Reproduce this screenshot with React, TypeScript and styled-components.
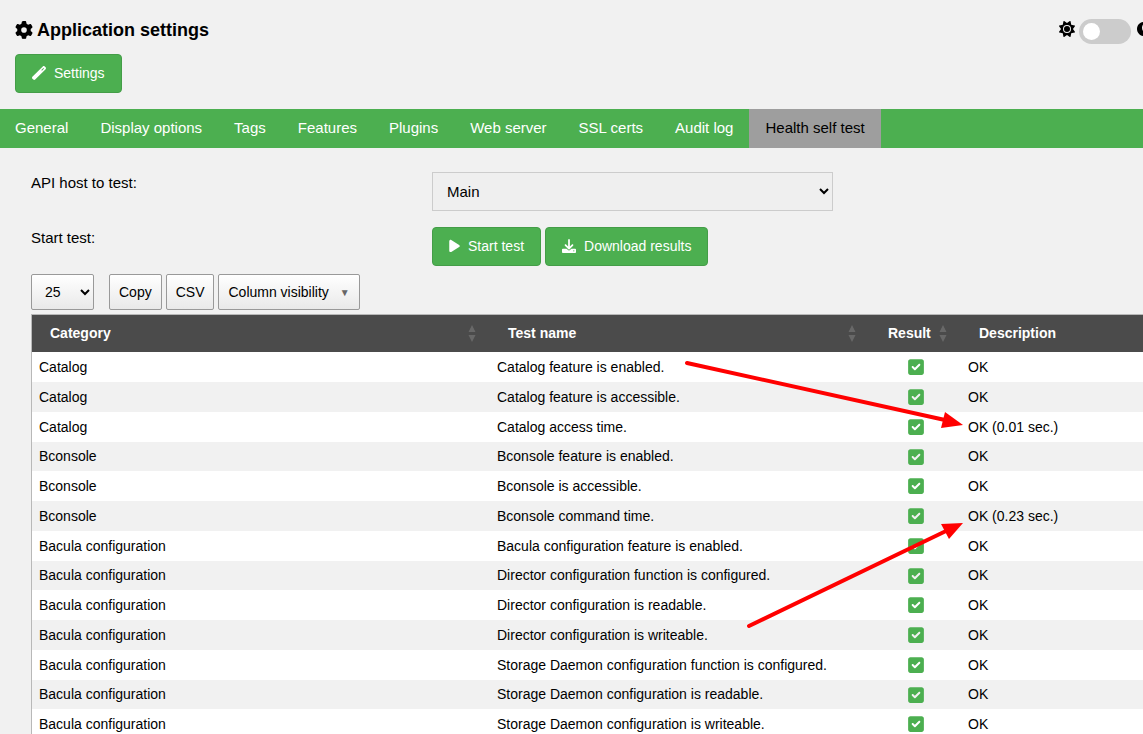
import React from "react";
import styled, { createGlobalStyle } from "styled-components";
import { FaGear, FaMoon, FaSun } from "react-icons/fa6";

const GlobalStyle = createGlobalStyle`
  *, *::before, *::after { box-sizing: border-box; }
  body {
    margin: 0;
    background: #f1f1f1;
    color: #000;
    font: 15px/22px "Liberation Sans", Arial, sans-serif;
  }
  button, select { font-family: inherit; color: inherit; }
`;

const Page = styled.div`
  position: relative;
  min-height: 100vh;
  overflow-x: clip;
`;

const Canvas = styled.div`
  width: calc(100% + 107px);
`;

const Header = styled.header`
  display: flex;
  align-items: center;
  height: 54px;
  padding: 8px 99px 0 15px;
`;

const Title = styled.h1`
  display: flex;
  align-items: center;
  gap: 4px;
  margin: 0;
  padding-bottom: 2px;
  font-size: 18px;
  line-height: 24px;
`;

const ThemeSwitch = styled.label`
  display: flex;
  align-items: center;
  gap: 4px;
  margin-left: auto;
  & > svg { margin-bottom: 4px; }
`;

const Toggle = styled.input`
  appearance: none;
  display: flex;
  align-items: center;
  width: 52px;
  height: 25px;
  margin: 0;
  padding: 0 4px;
  border-radius: 13px;
  background: #ccc;
  &::before {
    content: "";
    width: 17px;
    height: 17px;
    border-radius: 50%;
    background: #fff;
  }
  &:checked { justify-content: flex-end; background: #4caf50; }
`;

const Actions = styled.div`
  display: flex;
  padding: 0 15px 16px;
`;

const GreenButton = styled.button`
  display: inline-flex;
  align-items: center;
  gap: 8px;
  height: 39px;
  padding: 0 16px 2px;
  border: 1px solid #449d48;
  border-radius: 4px;
  background: #4caf50;
  color: #fff;
  font-size: 14px;
  cursor: pointer;
`;

const Glyph = styled.svg<{ $width: number }>`
  flex: none;
  width: ${(p) => p.$width}px;
  height: 14px;
  fill: currentColor;
`;

const TabBar = styled.nav`
  display: flex;
  background: #4caf50;
`;

const Tab = styled.a<{ $active?: boolean }>`
  padding: 8px 16px 9px;
  background: ${(p) => (p.$active ? "#9e9e9e" : "transparent")};
  color: ${(p) => (p.$active ? "#000" : "#fff")};
  text-decoration: none;
  &:first-child { padding-left: 15px; }
`;

const Content = styled.main`
  padding: 24px 16px 0 31px;
`;

const Fields = styled.div`
  display: grid;
  row-gap: 16px;
  margin-bottom: 8px;
`;

const Field = styled.div`
  display: grid;
  grid-template-columns: repeat(3, 1fr);
`;

const Buttons = styled.div`
  display: flex;
  gap: 4px;
`;

const HostSelect = styled.select`
  height: 39px;
  padding: 0 0 0 10px;
  border: 1px solid #ccc;
  background: #efefef;
  font-size: 15px;
`;

const Toolbar = styled.div`
  display: flex;
  gap: 4px;
  margin-bottom: 4px;
`;

const LengthSelect = styled.select`
  width: 63px;
  height: 36px;
  margin-right: 11px;
  padding: 0 0 0 9px;
  border: 1px solid #999;
  border-radius: 2px;
  background: linear-gradient(#fff, #e9e9e9);
  font-size: 14px;
`;

const ToolButton = styled.button`
  display: inline-flex;
  align-items: center;
  gap: 11px;
  height: 36px;
  padding: 0 9px;
  border: 1px solid #999;
  border-radius: 2px;
  background: linear-gradient(#fff, #e9e9e9);
  font-size: 14px;
  cursor: pointer;
`;

const Caret = styled.span`
  color: #666;
  font-size: 10px;
`;

const Table = styled.table`
  width: 100%;
  table-layout: fixed;
  border-spacing: 0;
  border: 1px solid #b8b8b8;
  font-size: 14px;
  line-height: 21px;
`;

const Column = styled.col<{ $width: string }>`
  width: ${(p) => p.$width};
`;

const Th = styled.th`
  height: 37px;
  padding: 0 18px 1px;
  background: #4b4b4b;
  color: #fff;
  text-align: left;
`;

const Heading = styled.div`
  display: flex;
  align-items: center;
  justify-content: space-between;
  gap: 8px;
  margin-right: -4px;
`;

const Sorter = styled.svg`
  flex: none;
  width: 8px;
  height: 18px;
  fill: #686868;
`;

/* Three 30px rows and one of 29px keep the average row a little under 30px. */
const Row = styled.tr`
  height: 30px;
  background: #fff;
  &:nth-child(even) { background: #f1f1f1; }
  &:nth-child(4n) { height: 29px; }
`;

const Td = styled.td<{ $center?: boolean }>`
  padding: 0 7px;
  text-align: ${(p) => (p.$center ? "center" : "left")};
`;

const Passed = styled.svg`
  display: block;
  width: 16px;
  height: 18px;
  margin: 0 auto;
  fill: #4caf50;
`;

const Arrows = styled.svg`
  position: absolute;
  top: 0;
  left: 0;
  pointer-events: none;
`;

const tabs = [
  "General",
  "Display options",
  "Tags",
  "Features",
  "Plugins",
  "Web server",
  "SSL certs",
  "Audit log",
  "Health self test",
];

const results: [string, string, string][] = [
  ["Catalog", "Catalog feature is enabled.", "OK"],
  ["Catalog", "Catalog feature is accessible.", "OK"],
  ["Catalog", "Catalog access time.", "OK (0.01 sec.)"],
  ["Bconsole", "Bconsole feature is enabled.", "OK"],
  ["Bconsole", "Bconsole is accessible.", "OK"],
  ["Bconsole", "Bconsole command time.", "OK (0.23 sec.)"],
  ["Bacula configuration", "Bacula configuration feature is enabled.", "OK"],
  ["Bacula configuration", "Director configuration function is configured.", "OK"],
  ["Bacula configuration", "Director configuration is readable.", "OK"],
  ["Bacula configuration", "Director configuration is writeable.", "OK"],
  ["Bacula configuration", "Storage Daemon configuration function is configured.", "OK"],
  ["Bacula configuration", "Storage Daemon configuration is readable.", "OK"],
  ["Bacula configuration", "Storage Daemon configuration is writeable.", "OK"],
];

function WandIcon() {
  return (
    <Glyph $width={14} viewBox="0 0 512 512" aria-hidden="true">
      <path d="M14.06 463.3c-18.75-18.75-18.75-49.14 0-67.88L395.4 14.06c18.7-18.75 49.1-18.75 67.9 0l34.6 34.64c18.8 18.74 18.8 49.14 0 67.84L116.5 497.9c-18.7 18.8-49.1 18.8-67.85 0l-34.59-34.6zM365 170L440 95L417 72L342 147z" />
    </Glyph>
  );
}

function PlayIcon() {
  return (
    <Glyph $width={11} viewBox="0 0 384 512" aria-hidden="true">
      <path d="M361 215C375.3 223.8 384 239.3 384 256C384 272.7 375.3 288.2 361 296.1L73.03 472.1C58.21 482 39.66 482.4 24.52 473.9C9.377 465.4 0 449.4 0 432V80C0 62.64 9.377 46.63 24.52 38.13C39.66 29.64 58.21 29.99 73.03 39.04L361 215z" />
    </Glyph>
  );
}

function DownloadIcon() {
  return (
    <Glyph $width={14} viewBox="0 0 512 512" aria-hidden="true">
      <path d="M480 352h-133.5l-45.25 45.25C289.2 409.3 273.1 416 256 416s-33.16-6.656-45.25-18.75L165.5 352H32c-17.67 0-32 14.33-32 32v96c0 17.67 14.33 32 32 32h448c17.67 0 32-14.33 32-32v-96C512 366.3 497.7 352 480 352zM432 456c-13.2 0-24-10.8-24-24c0-13.2 10.8-24 24-24s24 10.8 24 24C456 445.2 445.2 456 432 456zM233.4 374.6C239.6 380.9 247.8 384 256 384s16.38-3.125 22.62-9.375l128-128c12.49-12.5 12.49-32.75 0-45.25c-12.5-12.5-32.76-12.5-45.25 0L288 274.8V32c0-17.67-14.33-32-32-32C238.3 0 224 14.33 224 32v242.8L150.6 201.4c-12.49-12.5-32.75-12.5-45.25 0c-12.49 12.5-12.49 32.75 0 45.25L233.4 374.6z" />
    </Glyph>
  );
}

function PassedIcon() {
  return (
    <Passed viewBox="0 0 448 512" role="img" aria-label="Passed">
      <path d="M384 32C419.3 32 448 60.65 448 96V416C448 451.3 419.3 480 384 480H64C28.65 480 0 451.3 0 416V96C0 60.65 28.65 32 64 32H384zM339.8 211.8C350.7 200.9 350.7 183.1 339.8 172.2C328.9 161.3 311.1 161.3 300.2 172.2L192 280.4L147.8 236.2C136.9 225.3 119.1 225.3 108.2 236.2C97.27 247.1 97.27 264.9 108.2 275.8L172.2 339.8C183.1 350.7 200.9 350.7 211.8 339.8L339.8 211.8z" />
    </Passed>
  );
}

function SortHeading({ children }: { children: React.ReactNode }) {
  return (
    <Th scope="col">
      <Heading>
        {children}
        <Sorter viewBox="0 0 8 18" aria-hidden="true">
          <path d="M4 1L7.5 8H0.5zM4 18L7.5 11H0.5z" />
        </Sorter>
      </Heading>
    </Th>
  );
}

export default function App() {
  return (
    <Page>
      <GlobalStyle />
      <Canvas>
        <Header>
          <Title>
            <FaGear /> Application settings
          </Title>
          <ThemeSwitch>
            <FaSun size={16} />
            <Toggle type="checkbox" aria-label="Dark mode" />
            <FaMoon size={16} />
          </ThemeSwitch>
        </Header>
        <Actions>
          <GreenButton type="button">
            <WandIcon /> Settings
          </GreenButton>
        </Actions>
        <TabBar>
          {tabs.map((name) => (
            <Tab key={name} href="#" $active={name === "Health self test"}>
              {name}
            </Tab>
          ))}
        </TabBar>
        <Content>
          <Fields>
            <Field>
              <label htmlFor="host">API host to test:</label>
              <HostSelect id="host">
                <option>Main</option>
              </HostSelect>
            </Field>
            <Field>
              <span>Start test:</span>
              <Buttons>
                <GreenButton type="button">
                  <PlayIcon /> Start test
                </GreenButton>
                <GreenButton type="button">
                  <DownloadIcon /> Download results
                </GreenButton>
              </Buttons>
            </Field>
          </Fields>
          <Toolbar>
            <LengthSelect aria-label="Rows per page">
              <option>25</option>
            </LengthSelect>
            <ToolButton type="button">Copy</ToolButton>
            <ToolButton type="button">CSV</ToolButton>
            <ToolButton type="button">
              Column visibility <Caret>▼</Caret>
            </ToolButton>
          </Toolbar>
          <Table>
            <colgroup>
              <Column $width="458px" />
              <Column $width="380px" />
              <Column $width="91px" />
              <Column $width="auto" />
            </colgroup>
            <thead>
              <tr>
                <SortHeading>Category</SortHeading>
                <SortHeading>Test name</SortHeading>
                <SortHeading>Result</SortHeading>
                <SortHeading>Description</SortHeading>
              </tr>
            </thead>
            <tbody>
              {results.map(([category, test, description]) => (
                <Row key={test}>
                  <Td>{category}</Td>
                  <Td>{test}</Td>
                  <Td $center>
                    <PassedIcon />
                  </Td>
                  <Td>{description}</Td>
                </Row>
              ))}
            </tbody>
          </Table>
        </Content>
      </Canvas>
      <Arrows width="1000" height="700" viewBox="0 0 1000 700" aria-hidden="true">
        <g stroke="#f00" strokeWidth="4" strokeLinecap="round">
          <line x1="687" y1="363" x2="945" y2="420" />
          <line x1="749" y1="626" x2="946" y2="531" />
        </g>
        <g fill="#f00">
          <polygon points="963,425 945,412 941,428" />
          <polygon points="963,523 941,524 949,539" />
        </g>
      </Arrows>
    </Page>
  );
}
